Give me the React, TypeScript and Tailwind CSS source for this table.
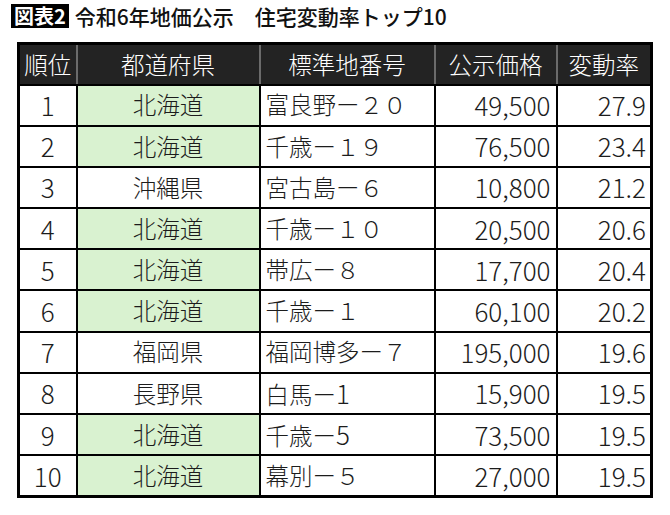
import React from 'react';

type Row = { rank: string; pref: string; addr: string; num?: string; price: string; rate: string };

const rows: Row[] = [
  { rank: '1', pref: '北海道', addr: '富良野ー２０', price: '49,500', rate: '27.9' },
  { rank: '2', pref: '北海道', addr: '千歳ー１９', price: '76,500', rate: '23.4' },
  { rank: '3', pref: '沖縄県', addr: '宮古島ー６', price: '10,800', rate: '21.2' },
  { rank: '4', pref: '北海道', addr: '千歳ー１０', price: '20,500', rate: '20.6' },
  { rank: '5', pref: '北海道', addr: '帯広ー８', price: '17,700', rate: '20.4' },
  { rank: '6', pref: '北海道', addr: '千歳ー１', price: '60,100', rate: '20.2' },
  { rank: '7', pref: '福岡県', addr: '福岡博多ー７', price: '195,000', rate: '19.6' },
  { rank: '8', pref: '長野県', addr: '白馬ー', num: '1', price: '15,900', rate: '19.5' },
  { rank: '9', pref: '北海道', addr: '千歳ー', num: '5', price: '73,500', rate: '19.5' },
  { rank: '10', pref: '北海道', addr: '幕別ー５', price: '27,000', rate: '19.5' },
];

const heads = ['順位', '都道府県', '標準地番号', '公示価格', '変動率'];

export default function App() {
  return (
    <div
      className="w-[670px] h-[515px] bg-white text-[#1c1c1c]"
      style={{ fontFamily: '"Noto Sans CJK JP", "Noto Sans", sans-serif' }}
    >
      {/* title */}
      <div className="flex items-center pt-[4px] pl-[11px] h-[28px]">
        <span className="bg-black text-white font-bold text-[20px] leading-[24px] h-[24px] px-[3px]">図表2</span>
        <span className="ml-[6px] text-[21px] leading-[24px] font-medium text-[#111]">令和6年地価公示　住宅変動率トップ10</span>
      </div>

      <table className="mt-[14px] ml-[17px] w-[633px] table-fixed border-collapse border-[3px] border-black text-[23.5px] font-light">
        <colgroup>
          <col className="w-[58px]" />
          <col className="w-[183px]" />
          <col className="w-[175px]" />
          <col className="w-[122px]" />
          <col className="w-[95px]" />
        </colgroup>
        <thead>
          <tr className="h-[41px] bg-[#232323] text-white">
            {heads.map((h, i) => (
              <th
                key={h}
                className={`font-light p-0 leading-none border-y-2 border-black ${i > 0 ? 'border-l-2 border-l-[#6b6b6b]' : ''}`}
              >
                {h}
              </th>
            ))}
          </tr>
        </thead>
        <tbody>
          {rows.map((r) => (
            <tr key={r.rank} className="h-[41.2px]">
              <td className="border-2 border-black text-center p-0 leading-none text-[26px]">{r.rank}</td>
              <td className={`border-2 border-black text-center p-0 leading-none ${r.pref === '北海道' ? 'bg-[#d9f2d0]' : ''}`}>{r.pref}</td>
              <td className="border-2 border-black text-left pl-[5px] leading-none whitespace-nowrap">
                {r.addr}
                {r.num && <span className="text-[26px]">{r.num}</span>}
              </td>
              <td className="border-2 border-black text-right pr-[5px] leading-none text-[26px]">{r.price}</td>
              <td className="border-2 border-black text-right pr-[4px] leading-none text-[26px]">{r.rate}</td>
            </tr>
          ))}
        </tbody>
      </table>
    </div>
  );
}
